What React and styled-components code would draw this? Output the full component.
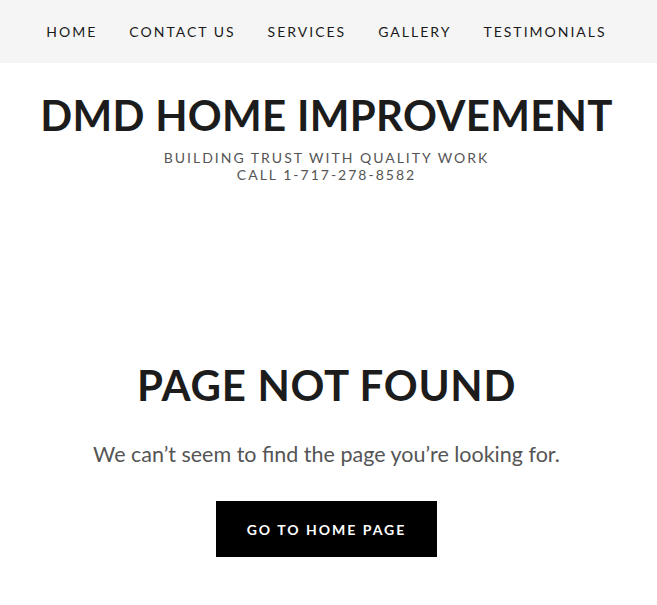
import React from "react";
import styled, { createGlobalStyle } from "styled-components";

const Global = createGlobalStyle`
  body {
    margin: 0;
    background: #fff;
    font-family: Lato, "Open Sans", sans-serif;
  }
`;

const Page = styled.div`
  padding-right: 4px;
`;

const Nav = styled.nav`
  height: 63px;
  margin-right: -4px;
  padding-right: 4px;
  background: #f5f5f5;
  display: flex;
  align-items: center;
  justify-content: center;
  gap: 32px;
  box-sizing: border-box;
`;

const NavLink = styled.a`
  font-size: 14px;
  letter-spacing: 2px;
  color: #1a1a1a;
  text-decoration: none;
  text-transform: uppercase;
`;

const Header = styled.header`
  display: flex;
  flex-direction: column;
  align-items: center;
  padding-top: 25px;
`;

const Title = styled.h1`
  margin: 0;
  font-size: 42px;
  font-weight: 700;
  letter-spacing: 0.3px;
  color: #1c1c1c;
  line-height: 54px;
`;

const Tagline = styled.div`
  margin-top: 7px;
  font-size: 14px;
  letter-spacing: 2px;
  color: #555;
  line-height: 17px;
  text-align: center;
  text-transform: uppercase;
`;

const Main = styled.main`
  display: flex;
  flex-direction: column;
  align-items: center;
  padding-top: 175px;
`;

const Heading = styled.h2`
  margin: 0;
  font-size: 42px;
  font-weight: 700;
  letter-spacing: 0.7px;
  color: #1c1c1c;
  line-height: 54px;
`;

const Message = styled.p`
  margin: 27px 0 0;
  font-size: 21.5px;
  color: #555;
  line-height: 30px;
`;

const Button = styled.a`
  margin-top: 32px;
  width: 221px;
  height: 56px;
  background: #000;
  color: #fff;
  display: flex;
  align-items: center;
  justify-content: center;
  font-size: 14px;
  font-weight: 700;
  letter-spacing: 2px;
  text-decoration: none;
`;

const links = ["Home", "Contact Us", "Services", "Gallery", "Testimonials"];

export default function App() {
  return (
    <Page>
      <Global />
      <Nav>
        {links.map((l) => (
          <NavLink key={l} href="#">
            {l}
          </NavLink>
        ))}
      </Nav>
      <Header>
        <Title>DMD HOME IMPROVEMENT</Title>
        <Tagline>
          Building trust with quality work
          <br />
          Call 1-717-278-8582
        </Tagline>
      </Header>
      <Main>
        <Heading>PAGE NOT FOUND</Heading>
        <Message>We can’t seem to find the page you’re looking for.</Message>
        <Button href="#">GO TO HOME PAGE</Button>
      </Main>
    </Page>
  );
}
